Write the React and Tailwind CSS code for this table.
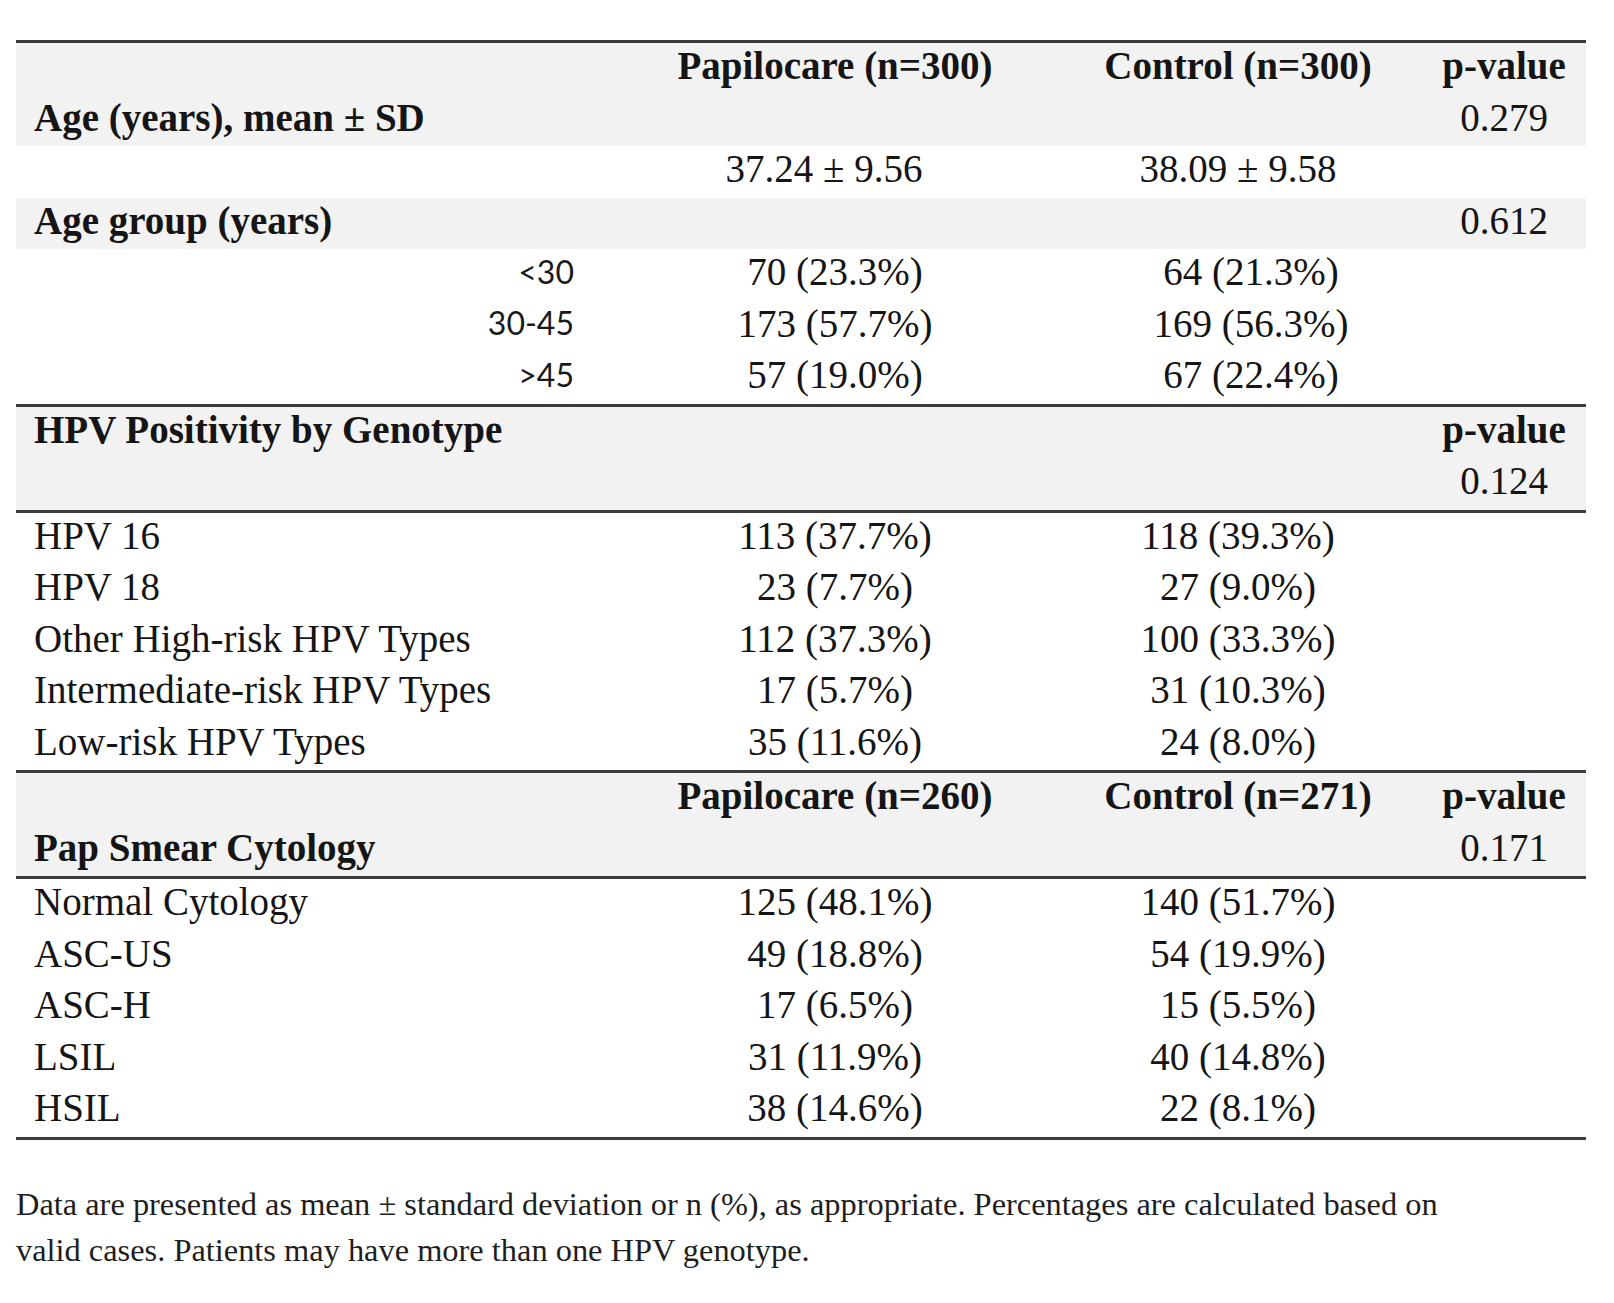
import React from 'react'

const serif = { fontFamily: '"Liberation Serif", "Times New Roman", serif' }

function Rule() {
  return <div className="h-[3px] bg-[#3c3c3c]" />
}

function Row({ gray, cells }) {
  const [a, b, c, d] = cells
  return (
    <div className={`flex h-[51.5px] items-center pb-[6px] ${gray ? 'bg-[#f2f2f2]' : 'bg-white'}`}>
      <div className="w-[600px] shrink-0 pl-[18px]">{a}</div>
      <div className="w-[438px] shrink-0 text-center">{b}</div>
      <div className="w-[368px] shrink-0 text-center">{c}</div>
      <div className="w-[164px] shrink-0 text-center">{d}</div>
    </div>
  )
}

function AgeLabel({ children }) {
  return (
    <div className="pr-[42px] text-right text-[32px] font-['Lato',sans-serif] text-[#1a1a1a]">{children}</div>
  )
}

function Shift({ children }) {
  return <span className="pl-[26px]">{children}</span>
}

const hpvRows = [
  ['HPV 16', '113 (37.7%)', '118 (39.3%)'],
  ['HPV 18', '23 (7.7%)', '27 (9.0%)'],
  ['Other High-risk HPV Types', '112 (37.3%)', '100 (33.3%)'],
  ['Intermediate-risk HPV Types', '17 (5.7%)', '31 (10.3%)'],
  ['Low-risk HPV Types', '35 (11.6%)', '24 (8.0%)'],
]

const papRows = [
  ['Normal Cytology', '125 (48.1%)', '140 (51.7%)'],
  ['ASC-US', '49 (18.8%)', '54 (19.9%)'],
  ['ASC-H', '17 (6.5%)', '15 (5.5%)'],
  ['LSIL', '31 (11.9%)', '40 (14.8%)'],
  ['HSIL', '38 (14.6%)', '22 (8.1%)'],
]

export default function App() {
  return (
    <div className="min-h-[1303px] bg-white pt-[40px] pl-4 text-[#151515]" style={serif}>
      <div className="w-[1570px] text-[39px] leading-none">
        <Rule />
        <Row gray cells={[null, <b>Papilocare (n=300)</b>, <b>Control (n=300)</b>, <b>p-value</b>]} />
        <Row gray cells={[<b>Age (years), mean ± SD</b>, null, null, '0.279']} />
        <Row cells={[null, <span className="pr-[22px]">37.24 ± 9.56</span>, '38.09 ± 9.58', null]} />
        <Row gray cells={[<b>Age group (years)</b>, null, null, '0.612']} />
        <Row cells={[<AgeLabel>&lt;30</AgeLabel>, '70 (23.3%)', <Shift>64 (21.3%)</Shift>, null]} />
        <Row cells={[<AgeLabel>30-45</AgeLabel>, '173 (57.7%)', <Shift>169 (56.3%)</Shift>, null]} />
        <Row cells={[<AgeLabel>&gt;45</AgeLabel>, '57 (19.0%)', <Shift>67 (22.4%)</Shift>, null]} />
        <Rule />
        <Row gray cells={[<b>HPV Positivity by Genotype</b>, null, null, <b>p-value</b>]} />
        <Row gray cells={[null, null, null, '0.124']} />
        <Rule />
        {hpvRows.map((r) => (
          <Row key={r[0]} cells={[r[0], r[1], r[2], null]} />
        ))}
        <Rule />
        <Row gray cells={[null, <b>Papilocare (n=260)</b>, <b>Control (n=271)</b>, <b>p-value</b>]} />
        <Row gray cells={[<b>Pap Smear Cytology</b>, null, null, '0.171']} />
        <Rule />
        {papRows.map((r) => (
          <Row key={r[0]} cells={[r[0], r[1], r[2], null]} />
        ))}
        <Rule />
      </div>
      <p className="mt-[41px] w-[1500px] text-[32.4px] leading-[46px] text-[#1e1e1e]">
        Data are presented as mean ± standard deviation or n (%), as appropriate. Percentages are calculated based on
        <br />
        valid cases. Patients may have more than one HPV genotype.
      </p>
    </div>
  )
}
